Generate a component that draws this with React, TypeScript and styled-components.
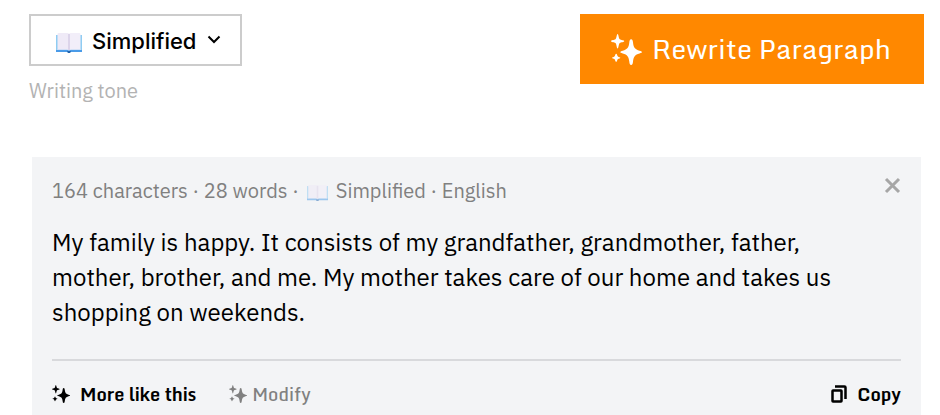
import React from "react";
import styled, { createGlobalStyle } from "styled-components";

const GlobalStyle = createGlobalStyle`
  *, *::before, *::after { box-sizing: border-box; }
  body {
    margin: 0;
    background: #fff;
    color: #000;
    font-family: "IBM Plex Sans", "Noto Sans", sans-serif;
  }
  button, select { font: inherit; color: inherit; margin: 0; }
`;

const Page = styled.main`
  padding: 14px 16px 0 29px;
`;

const Toolbar = styled.header`
  display: flex;
  justify-content: space-between;
  align-items: flex-start;
`;

const ToneField = styled.div`
  display: flex;
  flex-direction: column;
  align-items: flex-start;
  gap: 12px;
`;

const ToneBox = styled.div`
  display: flex;
  align-items: center;
  height: 52px;
  padding: 2px 19px 0 25px;
  border: 2px solid #ccc;
`;

const ToneSelect = styled.select`
  appearance: none;
  margin: 0 10px;
  padding: 0;
  border: 0;
  background: transparent;
  font-family: Inter, sans-serif;
  font-size: 22px;
  font-weight: 500;
  line-height: 28px;
  cursor: pointer;
`;

const Chevron = styled.svg`
  margin-bottom: 2px;
`;

const ToneLabel = styled.label`
  color: #b3b3b3;
  font-size: 20px;
  line-height: 26px;
`;

const PrimaryButton = styled.button`
  display: flex;
  align-items: center;
  gap: 10px;
  height: 70px;
  padding: 0 33px 0 31px;
  border: 0;
  background: #ff8800;
  color: #fff;
  font-family: Monda, Roboto, sans-serif;
  font-size: 27px;
  line-height: 36px;
  cursor: pointer;
`;

const Card = styled.article`
  margin: 53px 3px 0;
  padding: 20px;
  background: #f3f4f6;
`;

const CardHeader = styled.div`
  display: flex;
  justify-content: space-between;
  align-items: flex-start;
`;

const Meta = styled.p`
  display: flex;
  align-items: center;
  margin: 0;
  color: #808080;
  font-size: 20px;
  line-height: 28px;
`;

const MetaIcon = styled.span`
  display: flex;
  margin: 0 8px;
  opacity: 0.5;
`;

const CloseButton = styled.button`
  display: flex;
  padding: 0;
  border: 0;
  background: none;
  color: #a6a6a6;
  cursor: pointer;
`;

const Result = styled.p`
  margin: 20px 0 0;
  padding-right: 48px;
  font-size: 24px;
  line-height: 35px;
`;

const CardFooter = styled.footer`
  display: flex;
  align-items: center;
  gap: 33px;
  margin-top: 29px;
  padding-top: 21px;
  border-top: 2px solid #d8d9dc;
`;

const Action = styled.button<{ $muted?: boolean; $end?: boolean }>`
  display: flex;
  align-items: center;
  gap: ${(p) => (p.$muted ? "5px" : "10px")};
  margin-left: ${(p) => (p.$end ? "auto" : "0")};
  padding: 0;
  border: 0;
  background: none;
  color: ${(p) => (p.$muted ? "#808080" : "#000")};
  font-family: Monda, Roboto, sans-serif;
  font-size: 18px;
  font-weight: ${(p) => (p.$muted ? 500 : 700)};
  line-height: 24px;
  cursor: pointer;
`;

function Sparkles({ size }: { size: number }) {
  return (
    <svg width={size} height={size} viewBox="0 0 30 30" fill="currentColor" aria-hidden="true">
      <path d="M19.5 5C20.8 5 21.1 6.2 21.3 8.3C21.8 13.1 23.2 15 27.6 16.2C29.3 16.7 30 16.9 30 17.5C30 18.1 29.3 18.3 27.6 18.8C23.2 20 21.8 21.9 21.3 26.7C21.1 28.8 20.8 30 19.5 30C18.2 30 17.9 28.8 17.7 26.7C17.2 21.9 15.8 20 11.4 18.8C9.7 18.3 9 18.1 9 17.5C9 16.9 9.7 16.7 11.4 16.2C15.8 15 17.2 13.1 17.7 8.3C17.9 6.2 18.2 5 19.5 5Z" />
      <path d="M6.4 0C7.4 0 7.3 4.1 8.5 5.2C9.6 6.2 12.8 6 12.8 7C12.8 8 9.6 7.8 8.5 8.8C7.3 9.9 7.4 14 6.4 14C5.4 14 5.5 9.9 4.3 8.8C3.2 7.8 0 8 0 7C0 6 3.2 6.2 4.3 5.2C5.5 4.1 5.4 0 6.4 0Z" />
      <path d="M5 19C5.8 19 5.9 21 6.7 21.7C7.4 22.4 9 22.3 9 23C9 23.7 7.4 23.6 6.7 24.3C5.9 25 5.8 27 5 27C4.2 27 4.1 25 3.3 24.3C2.6 23.6 1 23.7 1 23C1 22.3 2.6 22.4 3.3 21.7C4.1 21 4.2 19 5 19Z" />
    </svg>
  );
}

const BookIcon = styled.svg`
  margin-top: 4px;
`;

function Book({ width, height }: { width: number; height: number }) {
  return (
    <BookIcon width={width} height={height} viewBox="0 0 26 20" preserveAspectRatio="none" aria-hidden="true">
      <path d="M0 2H26V19H15L13 20L11 19H0Z" fill="#4a9be8" />
      <path d="M0 2H2V17H0Z" fill="#8fccf2" />
      <path d="M24 2H26V17H24Z" fill="#8fccf2" />
      <path d="M1 16H25V17H14L13 18L12 17H1Z" fill="#b9d4f3" />
      <path d="M1.5 1Q1.5 0 3 0H11Q13 0 13 1V17L11 16.5H1.5Z" fill="#efeaf7" />
      <path d="M24.5 1Q24.5 0 23 0H15Q13 0 13 1V17L15 16.5H24.5Z" fill="#f2eef9" />
      <path d="M12 1H14V17H12Z" fill="#dcd4ea" />
      <path d="M11 18H15L14 20H12Z" fill="#2465ad" />
    </BookIcon>
  );
}

export default function App() {
  return (
    <>
      <GlobalStyle />
      <Page>
        <Toolbar>
          <ToneField>
            <ToneBox>
              <Book width={26} height={20} />
              <ToneSelect id="tone" defaultValue="simplified">
                <option value="simplified">Simplified</option>
              </ToneSelect>
              <Chevron width="14" height="10" viewBox="0 0 14 10" fill="none" stroke="currentColor" strokeWidth="2" aria-hidden="true">
                <path d="M1.5 1.5L7 7L12.5 1.5" />
              </Chevron>
            </ToneBox>
            <ToneLabel htmlFor="tone">Writing tone</ToneLabel>
          </ToneField>
          <PrimaryButton type="button">
            <Sparkles size={31} />
            Rewrite Paragraph
          </PrimaryButton>
        </Toolbar>

        <Card>
          <CardHeader>
            <Meta>
              <span>164 characters · 28 words ·</span>
              <MetaIcon><Book width={21} height={16} /></MetaIcon>
              <span>Simplified · English</span>
            </Meta>
            <CloseButton type="button" aria-label="Close">
              <svg width="17" height="17" viewBox="0 0 17 17" fill="none" stroke="currentColor" strokeWidth="3" aria-hidden="true">
                <path d="M2 2L15 15M15 2L2 15" />
              </svg>
            </CloseButton>
          </CardHeader>
          <Result>
            My family is happy. It consists of my grandfather, grandmother, father, mother, brother, and me. My
            mother takes care of our home and takes us shopping on weekends.
          </Result>
          <CardFooter>
            <Action type="button">
              <Sparkles size={18} />
              More like this
            </Action>
            <Action type="button" $muted>
              <Sparkles size={18} />
              Modify
            </Action>
            <Action type="button" $end>
              <svg width="16" height="18" viewBox="0 0 16 18" fill="none" stroke="currentColor" strokeWidth="2.5" aria-hidden="true">
                <path d="M4 1.5H13.5Q14.5 1.5 14.5 2.5V14" />
                <rect x="1.5" y="5.5" width="9" height="11" rx="0.5" />
              </svg>
              Copy
            </Action>
          </CardFooter>
        </Card>
      </Page>
    </>
  );
}
